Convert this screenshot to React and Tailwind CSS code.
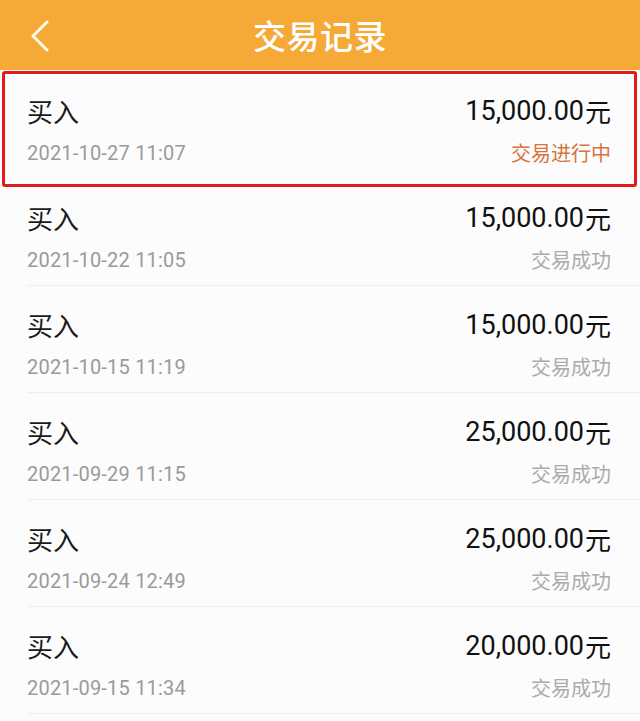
import React from "react";

const rows = [
  { amount: "15,000.00", date: "2021-10-27 11:07", status: "交易进行中", pending: true },
  { amount: "15,000.00", date: "2021-10-22 11:05", status: "交易成功" },
  { amount: "15,000.00", date: "2021-10-15 11:19", status: "交易成功" },
  { amount: "25,000.00", date: "2021-09-29 11:15", status: "交易成功" },
  { amount: "25,000.00", date: "2021-09-24 12:49", status: "交易成功" },
  { amount: "20,000.00", date: "2021-09-15 11:34", status: "交易成功" },
];

const cjk = { fontFamily: '"Noto Sans CJK SC", "Noto Sans", sans-serif' };

function Row({ r }) {
  return (
    <div className={`relative pl-[27px] ${r.pending ? "h-[109px] pt-[2px]" : "h-[107px]"}`}>
      <div className={`h-[107px] pr-[29px] flex flex-col ${r.pending ? "" : "border-b border-[#efefef]"}`}>
        <div className="flex items-center justify-between h-[26px] mt-[26px]">
          <span className="text-[26px] leading-none text-[#1a1a1a]" style={cjk}>买入</span>
          <span className="flex items-center text-[#111111]">
            <span className="font-['Roboto',sans-serif] text-[27px] leading-none tracking-[0px] mr-[1px]">
              {r.amount}
            </span>
            <span className="text-[26px] leading-none" style={cjk}>元</span>
          </span>
        </div>
        <div className="flex items-center justify-between h-[20px] mt-[19px]">
          <span className="font-['Roboto',sans-serif] text-[20px] leading-none text-[#9a9a9a] tracking-[0.2px]">
            {r.date}
          </span>
          <span
            className={`text-[20px] leading-none ${r.pending ? "text-[#d7743d]" : "text-[#ababab]"}`}
            style={cjk}
          >
            {r.status}
          </span>
        </div>
      </div>
      {r.pending && (
        <div className="absolute left-[2px] right-[3px] top-[1px] bottom-[-8px] border-[3px] border-[#e01b1b] rounded-[3px] pointer-events-none" />
      )}
    </div>
  );
}

export default function App() {
  return (
    <div className="w-[640px] h-[721px] overflow-hidden bg-[#fcfcfc]">
      <div className="relative h-[70px] bg-[#f5a936] flex items-center justify-center">
        <svg
          className="absolute left-[30px] top-[20px]"
          width="20"
          height="32"
          viewBox="0 0 20 32"
          fill="none"
        >
          <path d="M17 2 L3 16 L17 30" stroke="#fffbe8" strokeWidth="3" strokeLinecap="round" strokeLinejoin="round" />
        </svg>
        <span className="text-[33px] leading-none text-white font-medium tracking-[0.5px]" style={cjk}>
          交易记录
        </span>
      </div>
      {rows.map((r, i) => (
        <Row key={i} r={r} />
      ))}
    </div>
  );
}
